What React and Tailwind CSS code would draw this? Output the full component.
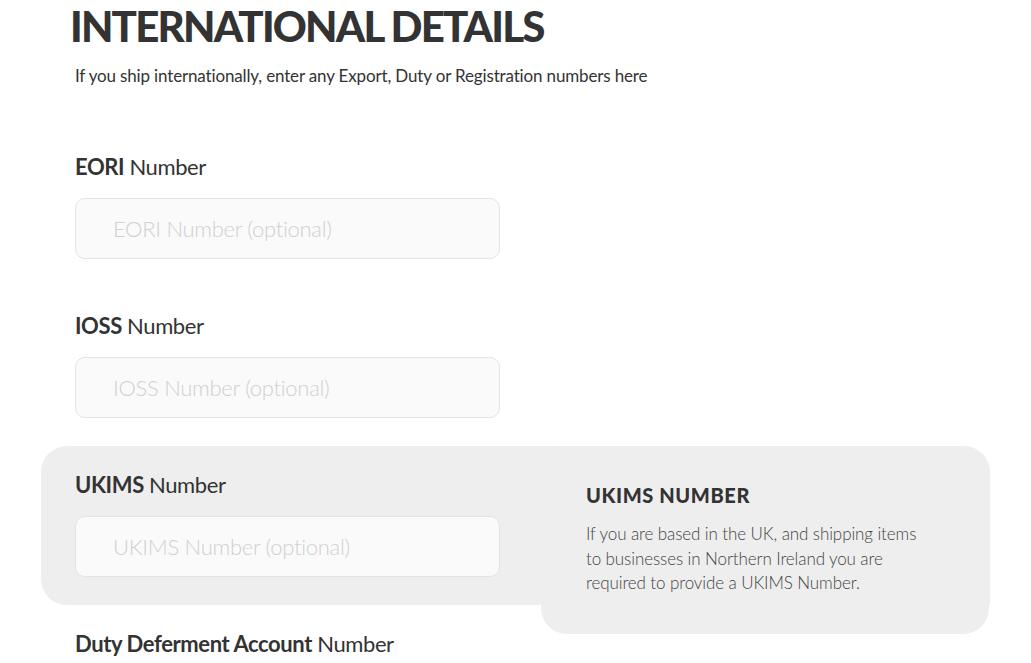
import React from "react";

const fields = [
  { bold: "EORI", placeholder: "EORI Number (optional)" },
  { bold: "IOSS", placeholder: "IOSS Number (optional)" },
  { bold: "UKIMS", placeholder: "UKIMS Number (optional)", help: true },
];

function Field({ bold, placeholder, help }) {
  return (
    <div className={"relative -mx-[34px] px-[34px] pt-6 pb-[28px] rounded-l-[26px] rounded-tr-[26px] " + (help ? "bg-[#eeeeee]" : "")}>
      <label className="block h-[30px] text-[22px] leading-[30px] text-[#333333] tracking-[-0.4px]">
        <span className="font-bold">{bold}</span> Number
      </label>
      <input
        type="text"
        placeholder={placeholder}
        className="mt-4 block w-[425px] h-[61px] rounded-[10px] border border-[#e3e3e3] bg-[#fafafa] pl-[37px] text-[22px] font-light text-[#333333] tracking-[-0.3px] placeholder:text-[#d0d0d0] outline-none"
      />
      {help && (
        <div className="absolute left-[500px] top-0 w-[448px] h-[188px] rounded-[26px] bg-[#eeeeee] pl-[45px] pt-[36px]">
          <h3 className="text-[20px] leading-[26px] font-black tracking-[0.6px] text-[#333333]">UKIMS NUMBER</h3>
          <p className="mt-[14px] w-[340px] text-[17px] leading-[24.5px] font-light text-[#444444] tracking-[-0.1px]">
            If you are based in the UK, and shipping items to businesses in Northern Ireland you are required to provide a UKIMS Number.
          </p>
        </div>
      )}
    </div>
  );
}

export default function App() {
  return (
    <div className="min-h-screen bg-white px-[75px] pt-[4px] overflow-hidden" style={{ fontFamily: "Lato, 'Noto Sans', sans-serif" }}>
      <h1 className="-ml-[5px] text-[42px] leading-[44px] font-black text-[#333333] tracking-[-1.8px]">INTERNATIONAL DETAILS</h1>
      <p className="mt-[16px] text-[17px] leading-[24px] text-[#333333] tracking-[-0.15px]">
        If you ship internationally, enter any Export, Duty or Registration numbers here
      </p>
      <div className="mt-[40px]">
        {fields.map((f) => (
          <Field key={f.bold} {...f} />
        ))}
        <div className="pt-6">
          <label className="block h-[30px] text-[22px] leading-[30px] text-[#333333] tracking-[-0.4px]">
            <span className="font-bold">Duty Deferment Account</span> Number
          </label>
        </div>
      </div>
    </div>
  );
}
